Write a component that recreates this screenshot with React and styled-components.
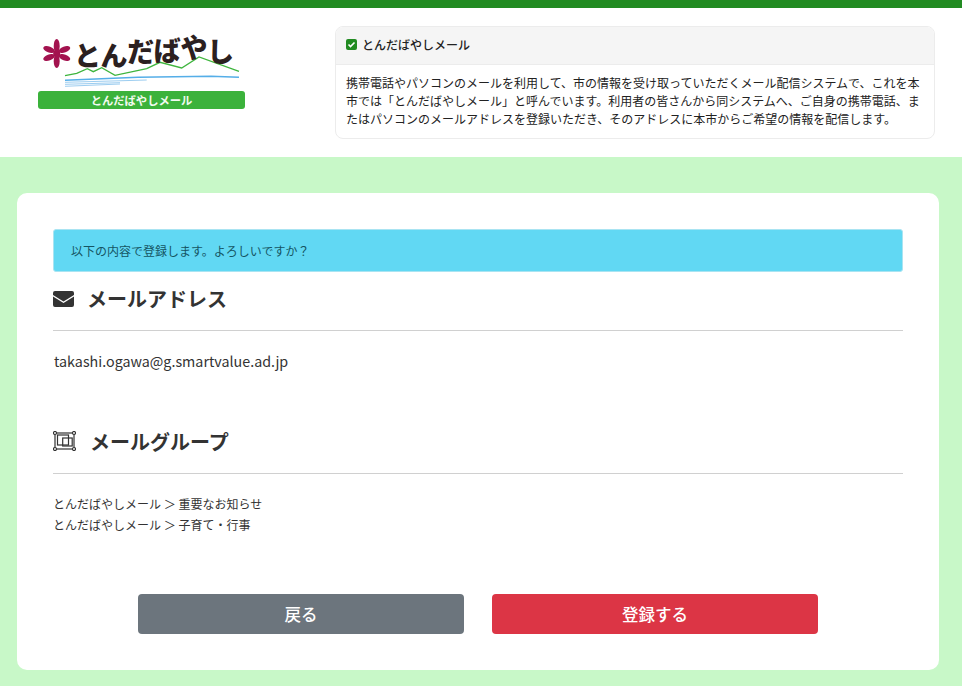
import React from "react";
import styled, { createGlobalStyle } from "styled-components";

const GlobalStyle = createGlobalStyle`
  * {
    box-sizing: border-box;
  }
  body {
    margin: 0;
    background: #c8f8c8;
    color: #333;
    font-family: "Noto Sans CJK JP", "Noto Sans", sans-serif;
  }
`;

const Page = styled.div`
  width: 962px;
  height: 686px;
  overflow: hidden;
`;

const Header = styled.header`
  display: flex;
  justify-content: space-between;
  height: 157px;
  padding: 18px 27px 0 38px;
  background: #fff;
  border-top: 8px solid #228b22;
`;

const Logo = styled.div`
  position: relative;
  width: 207px;
  height: 75px;
  margin-top: 8px;
`;

const LogoMark = styled.svg`
  position: absolute;
  left: 0;
  top: 0;
`;

const LogoName = styled.div`
  position: absolute;
  left: 36px;
  top: 1px;
  color: #2b2020;
  font-size: 27px;
  font-weight: 900;
  line-height: 40px;
  letter-spacing: -0.4px;
  white-space: nowrap;
`;

const LogoChar = styled.span`
  display: inline-block;
  transform: translateY(${(p) => -p.$lift}px);
`;

const LogoBar = styled.div`
  position: absolute;
  left: 0;
  bottom: 0;
  width: 207px;
  height: 18px;
  border-radius: 3px;
  background: #3bb23b;
  color: #f2faf0;
  font-size: 11.3px;
  font-weight: 700;
  line-height: 18px;
  text-align: center;
`;

const InfoCard = styled.section`
  width: 600px;
  height: 113px;
  border: 1px solid #ececec;
  border-radius: 8px;
  overflow: hidden;
`;

const InfoHead = styled.h2`
  display: flex;
  align-items: center;
  gap: 5px;
  height: 38px;
  margin: 0;
  padding: 0 10px 2px;
  background: #f5f5f5;
  border-bottom: 1px solid #ececec;
  color: #222;
  font-size: 12px;
  font-weight: 500;
`;

const InfoBody = styled.p`
  margin: 0;
  padding: 9px 10px;
  color: #222;
  font-size: 12px;
  line-height: 18px;
`;

const Panel = styled.main`
  width: 922px;
  height: 477px;
  margin: 36px 0 0 17px;
  padding: 36px;
  background: #fff;
  border-radius: 10px;
`;

const Alert = styled.div`
  height: 43px;
  padding: 0 17px;
  background: #61d8f3;
  border: 1px solid #a9e4f2;
  border-radius: 3px;
  color: #155563;
  font-size: 12px;
  line-height: 41px;
`;

const SectionTitle = styled.h3`
  display: flex;
  align-items: center;
  gap: ${(p) => p.$gap}px;
  height: 59px;
  margin: 0;
  padding-bottom: 6px;
  border-bottom: 1px solid #d0d0d0;
  color: #333;
  font-size: 20px;
  font-weight: 700;
`;

const MailSvg = styled.svg`
  margin-top: 2px;
`;

const EmailText = styled.p`
  height: 84px;
  margin: 0;
  padding: 19px 0 0 1px;
  color: #333;
  font-size: 14.3px;
  line-height: 22px;
`;

const GroupList = styled.ul`
  height: 120px;
  margin: 0;
  padding: 19px 0 0;
  list-style: none;
`;

const GroupItem = styled.li`
  color: #333;
  font-size: 12px;
  line-height: 21px;
`;

const Buttons = styled.div`
  display: flex;
  justify-content: center;
  gap: 28px;
`;

const Button = styled.button`
  width: 326px;
  height: 40px;
  border: 0;
  border-radius: 4px;
  background: ${(p) => p.$bg};
  color: #fff;
  font-family: inherit;
  font-size: 16.5px;
  font-weight: 500;
`;

function MailIcon() {
  return (
    <MailSvg width="21" height="16" viewBox="0 0 21 16">
      <path
        d="M2 0h17a2 2 0 0 1 2 2v2l-10.500 6.500L0 4V2a2 2 0 0 1 2-2zM0 5.500l10.500 6.500 10.500-6.500V14a2 2 0 0 1-2 2H2a2 2 0 0 1-2-2z"
        fill="#333"
      />
    </MailSvg>
  );
}

function GroupIcon() {
  return (
    <svg width="23" height="20" viewBox="0 0 23 20" fill="none" stroke="#333" strokeWidth="1.200">
      <rect x="2" y="2" width="19" height="16" />
      <rect x="4.500" y="4" width="11" height="10" />
      <rect x="9.700" y="7" width="9.500" height="8" />
      <circle cx="2" cy="2" r="1.500" fill="#fff" />
      <circle cx="21" cy="2" r="1.500" fill="#fff" />
      <circle cx="2" cy="18" r="1.500" fill="#fff" />
      <circle cx="21" cy="18" r="1.500" fill="#fff" />
    </svg>
  );
}

function CheckIcon() {
  return (
    <svg width="11" height="11" viewBox="0 0 11 11">
      <rect width="11" height="11" rx="2" fill="#228b22" />
      <path d="M2.500 5.500l2 2 4-4" fill="none" stroke="#fff" strokeWidth="1.600" />
    </svg>
  );
}

const logoChars = [
  ["と", 0],
  ["ん", 0],
  ["だ", 4],
  ["ば", 5],
  ["や", 8],
  ["し", 4],
];

function App() {
  return (
    <Page>
      <GlobalStyle />
      <Header>
        <Logo>
          <LogoMark width="207" height="57" viewBox="0 0 207 57">
            <g fill="#a3134f">
              <circle cx="18.700" cy="19.500" r="3.500" />
              <ellipse cx="18.700" cy="12" rx="3" ry="7" />
              <ellipse cx="18.700" cy="27" rx="3" ry="7" />
              <ellipse cx="11" cy="15.500" rx="6" ry="3" transform="rotate(20 11 15.500)" />
              <ellipse cx="26.500" cy="15.500" rx="6" ry="3" transform="rotate(-20 26.500 15.500)" />
              <ellipse cx="11" cy="23.500" rx="6" ry="3" transform="rotate(-20 11 23.500)" />
              <ellipse cx="26.500" cy="23.500" rx="6" ry="3" transform="rotate(20 26.500 23.500)" />
            </g>
            <path
              d="M27 41.700L38.700 39.300 49.300 34.700 55.300 37.700 63.700 33.700 77 41.300 108.700 34.700 122 28.300 143.700 34 161 23 201 37.300"
              fill="none"
              stroke="#3fb53f"
              strokeWidth="1.300"
            />
            <path d="M27 46.300Q100 42.500 173 42.300L201 43.300" fill="none" stroke="#55aee8" strokeWidth="1.500" />
            <path d="M27 48.300L108.700 46M27 50.300L82 48.700M27 52.300L82 50" fill="none" stroke="#9ccdf0" strokeWidth="1" />
          </LogoMark>
          <LogoName>
            {logoChars.map(([ch, lift], i) => (
              <LogoChar key={i} $lift={lift}>
                {ch}
              </LogoChar>
            ))}
          </LogoName>
          <LogoBar>とんだばやしメール</LogoBar>
        </Logo>
        <InfoCard>
          <InfoHead>
            <CheckIcon />
            とんだばやしメール
          </InfoHead>
          <InfoBody>
            携帯電話やパソコンのメールを利用して、市の情報を受け取っていただくメール配信システムで、これを本市では「とんだばやしメール」と呼んでいます。利用者の皆さんから同システムへ、ご自身の携帯電話、またはパソコンのメールアドレスを登録いただき、そのアドレスに本市からご希望の情報を配信します。
          </InfoBody>
        </InfoCard>
      </Header>
      <Panel>
        <Alert>以下の内容で登録します。よろしいですか？</Alert>
        <SectionTitle $gap={13}>
          <MailIcon />
          メールアドレス
        </SectionTitle>
        <EmailText>takashi.ogawa@g.smartvalue.ad.jp</EmailText>
        <SectionTitle $gap={14}>
          <GroupIcon />
          メールグループ
        </SectionTitle>
        <GroupList>
          <GroupItem>とんだばやしメール ＞ 重要なお知らせ</GroupItem>
          <GroupItem>とんだばやしメール ＞ 子育て・行事</GroupItem>
        </GroupList>
        <Buttons>
          <Button $bg="#6c757d">戻る</Button>
          <Button $bg="#dc3545">登録する</Button>
        </Buttons>
      </Panel>
    </Page>
  );
}

export default App;
